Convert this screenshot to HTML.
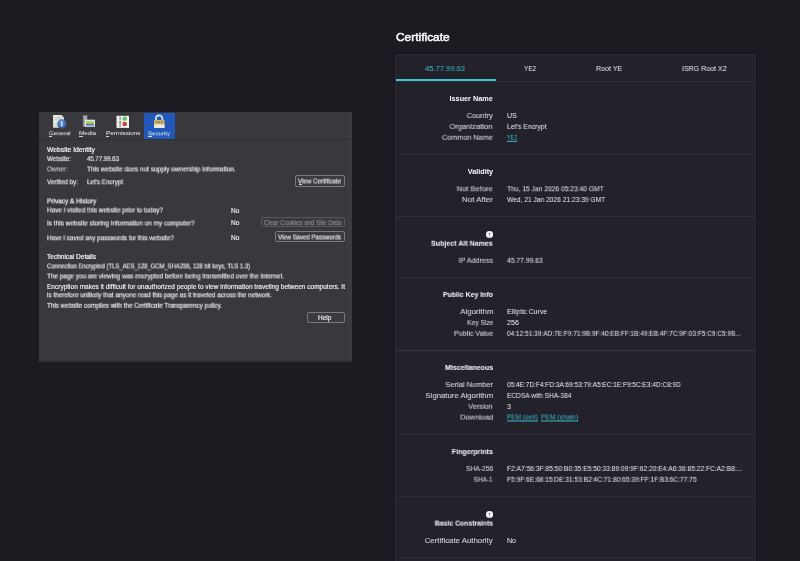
<!DOCTYPE html>
<html><head><meta charset="utf-8">
<style>
*{margin:0;padding:0;box-sizing:border-box}
html,body{width:800px;height:561px;overflow:hidden;background:#1c1b22;font-family:"Liberation Sans",sans-serif}
.x{position:absolute;white-space:pre;z-index:5;-webkit-text-stroke:0px currentColor;will-change:transform}
.xb{-webkit-text-stroke:0}
#dlg{position:absolute;left:39px;top:112px;width:313px;height:250px;background:#39383d}
.btn{position:absolute;border:1px solid #7a797e;border-radius:2px;background:#3b3a3f;z-index:2}
#card{position:absolute;left:395px;top:54px;width:361px;height:520px;background:#23222b;border:1px solid #2e2d36;border-radius:2px;box-shadow:0 0 0 1px rgba(10,10,14,0.35)}
.sep{position:absolute;left:400px;width:352px;height:1px;background:#302f38;z-index:3}
.info{position:absolute;width:7.2px;height:6.6px;border-radius:50%;background:#f4f4f8;z-index:4}
.info i{position:absolute;left:3.1px;top:1.5px;width:1px;height:2.6px;background:#6a6a72}
.info b{position:absolute;left:3.1px;top:4.5px;width:1px;height:0.9px;background:#9a9aa2}
</style></head><body>
<div id="dlg">
  <div style="position:absolute;left:308px;top:0;width:5px;height:250px;background:#3c3b40"></div>
  <div style="position:absolute;left:1px;top:248px;width:312px;height:2px;background:#323136"></div>
  <div style="position:absolute;left:0;top:27px;width:313px;height:1px;background:#2f2e33"></div>
  <div style="position:absolute;left:105px;top:1px;width:31px;height:26px;background:#2258b8"></div>
  <!-- general icon -->
  <svg style="position:absolute;left:13px;top:2px" width="18" height="16" viewBox="0 0 18 16">
    <defs><linearGradient id="gp" x1="0" y1="0" x2="1" y2="1"><stop offset="0" stop-color="#f4f4ee"/><stop offset="1" stop-color="#c8ccc4"/></linearGradient>
    <radialGradient id="gb" cx="0.45" cy="0.35" r="0.7"><stop offset="0" stop-color="#7aa6e0"/><stop offset="0.6" stop-color="#3e6eb4"/><stop offset="1" stop-color="#24508e"/></radialGradient></defs>
    <path d="M1.1 1 H9.3 L12 3.7 V13.7 H1.1 Z" fill="url(#gp)"/>
    <path d="M9.3 1 V3.7 H12" fill="#d8d8d0"/>
    <path d="M2.6 3.2 H8.4 M2.6 5 H9.6" stroke="#a8aca4" stroke-width="0.6"/>
    <circle cx="9.8" cy="9.9" r="4.6" fill="url(#gb)"/>
    <circle cx="9.8" cy="8.2" r="0.8" fill="#eef4ff"/>
    <rect x="9.1" y="9.5" width="1.4" height="2.9" fill="#eef4ff"/>
  </svg>
  <!-- media icon -->
  <svg style="position:absolute;left:43px;top:2px" width="18" height="16" viewBox="0 0 18 16">
    <rect x="0.8" y="1" width="4.8" height="12" fill="#6e6e70"/>
    <rect x="1.5" y="2" width="3.4" height="10" fill="#b4b4b0"/>
    <path d="M1.5 4 H4.9 M1.5 6 H4.9 M1.5 8 H4.9 M1.5 10 H4.9" stroke="#808080" stroke-width="0.5"/>
    <rect x="3" y="5.7" width="10" height="7.1" fill="#e8ecf2"/>
    <rect x="4" y="6.7" width="8" height="2.6" fill="#b8d890"/>
    <rect x="4" y="8.6" width="8" height="1.4" fill="#88c040"/>
    <rect x="4" y="10" width="8" height="1.8" fill="#6484c0"/>
  </svg>
  <!-- permissions icon -->
  <svg style="position:absolute;left:77px;top:3px" width="14" height="13" viewBox="0 0 14 13">
    <rect x="0.5" y="0.8" width="12.5" height="12.1" fill="#f2f4ec"/>
    <rect x="3.4" y="1.6" width="1.4" height="10.4" fill="#8c9092"/>
    <rect x="2.4" y="4.8" width="3.4" height="1.8" fill="#e4e6e6"/>
    <rect x="2.6" y="6.6" width="3" height="0.6" fill="#60646a"/>
    <circle cx="8.7" cy="3.6" r="2.2" fill="#58b840"/>
    <circle cx="8.3" cy="3.2" r="0.8" fill="#a8e090"/>
    <circle cx="8.7" cy="8.9" r="2.2" fill="#c02828"/>
    <circle cx="8.3" cy="8.5" r="0.8" fill="#f08080"/>
  </svg>
  <!-- lock icon -->
  <svg style="position:absolute;left:114px;top:2px" width="13" height="15" viewBox="0 0 13 15">
    <path d="M3 6.5 V4.6 A3.2 3.3 0 0 1 9.4 4.6 V6.5" fill="none" stroke="#e4e4ec" stroke-width="1.7"/>
    <rect x="1" y="6" width="10.5" height="8" rx="0.6" fill="#c8b464"/>
    <rect x="1" y="10.2" width="10.5" height="3.8" fill="#ece8dc"/>
    <circle cx="3.8" cy="8.1" r="0.6" fill="#4a4020"/><circle cx="6.25" cy="8.1" r="0.6" fill="#4a4020"/><circle cx="8.7" cy="8.1" r="0.6" fill="#4a4020"/>
  </svg>
</div>
<div class="btn" style="left:295.4px;top:175.4px;width:49.2px;height:11.2px"></div>
<div class="btn" style="left:261px;top:217.4px;width:83.6px;height:10px;border-color:#58575c"></div>
<div class="btn" style="left:275.4px;top:231.4px;width:69.2px;height:10.8px"></div>
<div class="btn" style="left:307px;top:311.5px;width:38px;height:11.5px"></div>
<div style="position:absolute;left:48.6px;top:136px;width:3.6px;height:0.8px;background:#d0d0d2;z-index:6"></div>
<div style="position:absolute;left:79.2px;top:136px;width:4px;height:0.8px;background:#d0d0d2;z-index:6"></div>
<div style="position:absolute;left:105.6px;top:136px;width:3.4px;height:0.8px;background:#d0d0d2;z-index:6"></div>
<div style="position:absolute;left:148.2px;top:136px;width:3.4px;height:0.8px;background:#d8e0f0;z-index:6"></div>
<div style="position:absolute;left:298.6px;top:184.3px;width:3.4px;height:0.8px;background:#d0d0d2;z-index:6"></div>
<div id="card"></div>
<div style="position:absolute;left:396px;top:79px;width:99.5px;height:2px;background:#3cc4d4;z-index:3"></div>
<div style="position:absolute;left:396px;top:81px;width:359px;height:1px;background:#302f38;z-index:3"></div>
<div class="sep" style="top:154px;left:400px;width:352px;background:#302f38"></div>
<div class="sep" style="top:216px;left:396px;width:359px;background:#302f38"></div>
<div class="sep" style="top:277px;left:400px;width:352px;background:#302f38"></div>
<div class="sep" style="top:350px;left:396px;width:359px;background:#393841"></div>
<div class="sep" style="top:434px;left:400px;width:355px;background:#302f38"></div>
<div class="sep" style="top:496px;left:397px;width:358px;background:#2e2d36"></div>
<div class="sep" style="top:557px;left:400px;width:352px;background:#302f38"></div>
<div class="info" style="left:485.5px;top:231.1px"><i></i><b></b></div>
<div class="info" style="left:485.5px;top:511.25px"><i></i><b></b></div>
<div class="x" style="top:28px;line-height:16px;font-size:11px;font-weight:normal;color:#fbfbfe;left:396.30px;transform-origin:0 50%;transform:translateY(0.60px) scaleX(1.0842);-webkit-text-stroke:0.5px currentColor">Certificate</div>
<div class="x" style="top:64px;line-height:10px;font-size:7.7px;font-weight:normal;color:#3cbccc;left:425.20px;transform-origin:0 50%;transform:translateY(0.00px) scaleX(0.9846);">45.77.99.63</div>
<div class="x" style="top:64px;line-height:10px;font-size:7.7px;font-weight:normal;color:#eeedf3;left:524.30px;transform-origin:0 50%;transform:translateY(0.00px) scaleX(0.8258);">YE2</div>
<div class="x" style="top:64px;line-height:10px;font-size:7.7px;font-weight:normal;color:#eeedf3;left:596.00px;transform-origin:0 50%;transform:translateY(0.00px) scaleX(0.9228);">Root YE</div>
<div class="x" style="top:64px;line-height:10px;font-size:7.7px;font-weight:normal;color:#eeedf3;left:681.50px;transform-origin:0 50%;transform:translateY(0.00px) scaleX(0.9134);">ISRG Root X2</div>
<div class="x xb" style="top:94px;line-height:10px;font-size:7.2px;font-weight:bold;color:#fbfbfe;left:450.25px;width:42.75px;text-align:right;transform-origin:100% 50%;transform:translateY(0.40px) scaleX(1.0105);">Issuer Name</div>
<div class="x" style="top:111px;line-height:10px;font-size:7.7px;font-weight:normal;color:#cecdd5;left:466.08px;width:26.92px;text-align:right;transform-origin:100% 50%;transform:translateY(0.00px) scaleX(0.9769);-webkit-text-stroke:0.12px currentColor">Country</div>
<div class="x" style="top:111px;line-height:10px;font-size:7.1px;font-weight:normal;color:#eeedf3;left:506.80px;transform-origin:0 50%;transform:translateY(0.00px) scaleX(1.0000);">US</div>
<div class="x" style="top:121px;line-height:10px;font-size:7.7px;font-weight:normal;color:#cecdd5;left:449.41px;width:43.59px;text-align:right;transform-origin:100% 50%;transform:translateY(0.90px) scaleX(0.9910);-webkit-text-stroke:0.12px currentColor">Organization</div>
<div class="x" style="top:121px;line-height:10px;font-size:7.1px;font-weight:normal;color:#eeedf3;left:506.80px;transform-origin:0 50%;transform:translateY(0.90px) scaleX(0.9731);">Let's Encrypt</div>
<div class="x" style="top:132px;line-height:10px;font-size:7.7px;font-weight:normal;color:#cecdd5;left:439.17px;width:53.83px;text-align:right;transform-origin:100% 50%;transform:translateY(0.80px) scaleX(0.9475);-webkit-text-stroke:0.12px currentColor">Common Name</div>
<div class="x" style="top:132px;line-height:10px;font-size:7.1px;font-weight:normal;color:#3cbccc;left:506.80px;transform-origin:0 50%;transform:translateY(0.80px) scaleX(0.7749);text-decoration:underline">YE2</div>
<div class="x xb" style="top:167px;line-height:10px;font-size:7.2px;font-weight:bold;color:#fbfbfe;left:467.83px;width:25.17px;text-align:right;transform-origin:100% 50%;transform:translateY(0.20px) scaleX(1.0130);">Validity</div>
<div class="x" style="top:184px;line-height:10px;font-size:7.7px;font-weight:normal;color:#cecdd5;left:456.25px;width:36.75px;text-align:right;transform-origin:100% 50%;transform:translateY(0.20px) scaleX(0.9796);-webkit-text-stroke:0.12px currentColor">Not Before</div>
<div class="x" style="top:184px;line-height:10px;font-size:7.1px;font-weight:normal;color:#eeedf3;left:506.80px;transform-origin:0 50%;transform:translateY(0.20px) scaleX(0.9431);">Thu, 15 Jan 2026 05:23:40 GMT</div>
<div class="x" style="top:195px;line-height:10px;font-size:7.7px;font-weight:normal;color:#cecdd5;left:463.08px;width:29.92px;text-align:right;transform-origin:100% 50%;transform:translateY(0.00px) scaleX(1.0293);-webkit-text-stroke:0.12px currentColor">Not After</div>
<div class="x" style="top:195px;line-height:10px;font-size:7.1px;font-weight:normal;color:#eeedf3;left:506.80px;transform-origin:0 50%;transform:translateY(0.00px) scaleX(0.9373);">Wed, 21 Jan 2026 21:23:39 GMT</div>
<div class="x xb" style="top:238px;line-height:10px;font-size:7.2px;font-weight:bold;color:#fbfbfe;left:430.16px;width:62.84px;text-align:right;transform-origin:100% 50%;transform:translateY(0.70px) scaleX(0.9834);">Subject Alt Names</div>
<div class="x" style="top:255px;line-height:10px;font-size:7.7px;font-weight:normal;color:#cecdd5;left:455.95px;width:37.05px;text-align:right;transform-origin:100% 50%;transform:translateY(0.80px) scaleX(0.9313);-webkit-text-stroke:0.12px currentColor">IP Address</div>
<div class="x" style="top:255px;line-height:10px;font-size:7.1px;font-weight:normal;color:#eeedf3;left:506.80px;transform-origin:0 50%;transform:translateY(0.80px) scaleX(0.9524);">45.77.99.63</div>
<div class="x xb" style="top:289px;line-height:10px;font-size:7.2px;font-weight:bold;color:#fbfbfe;left:441.08px;width:51.92px;text-align:right;transform-origin:100% 50%;transform:translateY(0.90px) scaleX(0.9630);">Public Key Info</div>
<div class="x" style="top:307px;line-height:10px;font-size:7.7px;font-weight:normal;color:#cecdd5;left:460.52px;width:32.48px;text-align:right;transform-origin:100% 50%;transform:translateY(0.00px) scaleX(1.0220);-webkit-text-stroke:0.12px currentColor">Algorithm</div>
<div class="x" style="top:307px;line-height:10px;font-size:7.1px;font-weight:normal;color:#eeedf3;left:506.80px;transform-origin:0 50%;transform:translateY(0.00px) scaleX(0.9660);">Elliptic Curve</div>
<div class="x" style="top:317px;line-height:10px;font-size:7.7px;font-weight:normal;color:#cecdd5;left:462.66px;width:30.34px;text-align:right;transform-origin:100% 50%;transform:translateY(0.90px) scaleX(0.8634);-webkit-text-stroke:0.12px currentColor">Key Size</div>
<div class="x" style="top:317px;line-height:10px;font-size:7.1px;font-weight:normal;color:#eeedf3;left:506.80px;transform-origin:0 50%;transform:translateY(0.90px) scaleX(1.0000);">256</div>
<div class="x" style="top:328px;line-height:10px;font-size:7.7px;font-weight:normal;color:#cecdd5;left:450.83px;width:42.17px;text-align:right;transform-origin:100% 50%;transform:translateY(0.80px) scaleX(0.9295);-webkit-text-stroke:0.12px currentColor">Public Value</div>
<div class="x" style="top:328px;line-height:10px;font-size:7.1px;font-weight:normal;color:#eeedf3;left:506.80px;transform-origin:0 50%;transform:translateY(0.80px) scaleX(0.9164);">04:12:51:39:AD:7E:F9:71:9B:9F:40:EB:FF:1B:49:EB:4F:7C:9F:03:F5:C9:C5:9B...</div>
<div class="x xb" style="top:362px;line-height:10px;font-size:7.2px;font-weight:bold;color:#fbfbfe;left:443.86px;width:49.14px;text-align:right;transform-origin:100% 50%;transform:translateY(0.90px) scaleX(0.9788);">Miscellaneous</div>
<div class="x" style="top:380px;line-height:10px;font-size:7.7px;font-weight:normal;color:#cecdd5;left:443.86px;width:49.14px;text-align:right;transform-origin:100% 50%;transform:translateY(0.00px) scaleX(0.9727);-webkit-text-stroke:0.12px currentColor">Serial Number</div>
<div class="x" style="top:380px;line-height:10px;font-size:7.1px;font-weight:normal;color:#eeedf3;left:506.80px;transform-origin:0 50%;transform:translateY(0.00px) scaleX(0.9163);">05:4E:7D:F4:FD:3A:69:53:79:A5:EC:1E:F9:5C:E3:4D:C8:9D</div>
<div class="x" style="top:390px;line-height:10px;font-size:7.7px;font-weight:normal;color:#cecdd5;left:425.91px;width:67.09px;text-align:right;transform-origin:100% 50%;transform:translateY(0.90px) scaleX(1.0061);-webkit-text-stroke:0.12px currentColor">Signature Algorithm</div>
<div class="x" style="top:390px;line-height:10px;font-size:7.1px;font-weight:normal;color:#eeedf3;left:506.80px;transform-origin:0 50%;transform:translateY(0.90px) scaleX(0.9281);">ECDSA with SHA-384</div>
<div class="x" style="top:401px;line-height:10px;font-size:7.7px;font-weight:normal;color:#cecdd5;left:467.36px;width:25.64px;text-align:right;transform-origin:100% 50%;transform:translateY(0.80px) scaleX(0.9516);-webkit-text-stroke:0.12px currentColor">Version</div>
<div class="x" style="top:401px;line-height:10px;font-size:7.1px;font-weight:normal;color:#eeedf3;left:506.80px;transform-origin:0 50%;transform:translateY(0.80px) scaleX(1.0000);">3</div>
<div class="x" style="top:412px;line-height:10px;font-size:7.7px;font-weight:normal;color:#cecdd5;left:458.80px;width:34.20px;text-align:right;transform-origin:100% 50%;transform:translateY(0.60px) scaleX(0.9648);-webkit-text-stroke:0.12px currentColor">Download</div>
<div class="x" style="top:412px;line-height:10px;font-size:7.1px;font-weight:normal;color:#3cbccc;left:506.80px;transform-origin:0 50%;transform:translateY(0.40px) scaleX(0.9113);text-decoration:underline">PEM (cert)</div>
<div class="x" style="top:412px;line-height:10px;font-size:7.1px;font-weight:normal;color:#3cbccc;left:540.50px;transform-origin:0 50%;transform:translateY(0.40px) scaleX(0.9505);text-decoration:underline">PEM (chain)</div>
<div class="x xb" style="top:447px;line-height:10px;font-size:7.2px;font-weight:bold;color:#fbfbfe;left:451.06px;width:41.94px;text-align:right;transform-origin:100% 50%;transform:translateY(0.10px) scaleX(0.9824);">Fingerprints</div>
<div class="x" style="top:463px;line-height:10px;font-size:7.7px;font-weight:normal;color:#cecdd5;left:461.80px;width:31.20px;text-align:right;transform-origin:100% 50%;transform:translateY(0.90px) scaleX(0.8717);-webkit-text-stroke:0.12px currentColor">SHA-256</div>
<div class="x" style="top:463px;line-height:10px;font-size:7.1px;font-weight:normal;color:#eeedf3;left:506.80px;transform-origin:0 50%;transform:translateY(0.90px) scaleX(0.9377);">F2:A7:56:3F:85:50:B0:35:E5:50:33:89:09:9F:62:20:E4:A6:36:85:22:FC:A2:B8:...</div>
<div class="x" style="top:474px;line-height:10px;font-size:7.7px;font-weight:normal;color:#cecdd5;left:470.34px;width:22.66px;text-align:right;transform-origin:100% 50%;transform:translateY(0.80px) scaleX(0.8386);-webkit-text-stroke:0.12px currentColor">SHA-1</div>
<div class="x" style="top:474px;line-height:10px;font-size:7.1px;font-weight:normal;color:#eeedf3;left:506.80px;transform-origin:0 50%;transform:translateY(0.80px) scaleX(0.9295);">F5:9F:6E:68:15:DE:31:53:B2:4C:71:80:65:39:FF:1F:B3:6C:77:75</div>
<div class="x xb" style="top:518px;line-height:10px;font-size:7.2px;font-weight:bold;color:#fbfbfe;left:431.88px;width:61.12px;text-align:right;transform-origin:100% 50%;transform:translateY(0.60px) scaleX(0.9554);">Basic Constraints</div>
<div class="x" style="top:535px;line-height:10px;font-size:7.7px;font-weight:normal;color:#cecdd5;left:426.34px;width:66.66px;text-align:right;transform-origin:100% 50%;transform:translateY(0.80px) scaleX(1.0202);-webkit-text-stroke:0.12px currentColor">Certificate Authority</div>
<div class="x" style="top:535px;line-height:10px;font-size:7.1px;font-weight:normal;color:#eeedf3;left:506.80px;transform-origin:0 50%;transform:translateY(0.80px) scaleX(1.0000);">No</div>
<div class="x" style="top:129px;line-height:8px;font-size:6.1px;font-weight:normal;color:#ededee;left:48.50px;transform-origin:0 50%;transform:translateY(0.13px) scaleX(0.9914);">General</div>
<div class="x" style="top:129px;line-height:8px;font-size:6.1px;font-weight:normal;color:#ededee;left:79.00px;transform-origin:0 50%;transform:translateY(0.13px) scaleX(1.0235);">Media</div>
<div class="x" style="top:129px;line-height:8px;font-size:6.1px;font-weight:normal;color:#ededee;left:105.50px;transform-origin:0 50%;transform:translateY(0.13px) scaleX(1.0395);">Permissions</div>
<div class="x" style="top:129px;line-height:8px;font-size:6.1px;font-weight:normal;color:#e8eef8;left:148.00px;transform-origin:0 50%;transform:translateY(0.33px) scaleX(0.9993);">Security</div>
<div class="x" style="top:145px;line-height:8px;font-size:6.5px;font-weight:normal;color:#ededee;left:47.00px;transform-origin:0 50%;transform:translateY(0.50px) scaleX(1.0403);-webkit-text-stroke:0.22px currentColor">Website Identity</div>
<div class="x" style="top:155px;line-height:8px;font-size:6.5px;font-weight:normal;color:#ededee;left:47.00px;transform-origin:0 50%;transform:translateY(0.10px) scaleX(0.9534);-webkit-text-stroke:0.15px currentColor">Website:</div>
<div class="x" style="top:155px;line-height:8px;font-size:6.5px;font-weight:normal;color:#ededee;left:87.00px;transform-origin:0 50%;transform:translateY(0.10px) scaleX(0.9318);-webkit-text-stroke:0.15px currentColor">45.77.99.63</div>
<div class="x" style="top:165px;line-height:8px;font-size:6.5px;font-weight:normal;color:#c6c6ca;left:47.00px;transform-origin:0 50%;transform:translateY(0.40px) scaleX(0.9784);-webkit-text-stroke:0.15px currentColor">Owner:</div>
<div class="x" style="top:165px;line-height:8px;font-size:6.5px;font-weight:normal;color:#ededee;left:87.00px;transform-origin:0 50%;transform:translateY(0.40px) scaleX(0.9862);-webkit-text-stroke:0.15px currentColor">This website does not supply ownership information.</div>
<div class="x" style="top:178px;line-height:8px;font-size:6.5px;font-weight:normal;color:#ededee;left:47.00px;transform-origin:0 50%;transform:translateY(0.30px) scaleX(0.9636);-webkit-text-stroke:0.15px currentColor">Verified by:</div>
<div class="x" style="top:178px;line-height:8px;font-size:6.5px;font-weight:normal;color:#ededee;left:87.00px;transform-origin:0 50%;transform:translateY(0.30px) scaleX(0.9632);-webkit-text-stroke:0.15px currentColor">Let's Encrypt</div>
<div class="x" style="top:177px;line-height:8px;font-size:6.5px;font-weight:normal;color:#ededee;left:298.40px;transform-origin:0 50%;transform:translateY(0.50px) scaleX(0.9546);-webkit-text-stroke:0.15px currentColor">View Certificate</div>
<div class="x" style="top:197px;line-height:8px;font-size:6.5px;font-weight:normal;color:#ededee;left:47.00px;transform-origin:0 50%;transform:translateY(0.40px) scaleX(0.9943);-webkit-text-stroke:0.22px currentColor">Privacy &amp; History</div>
<div class="x" style="top:206px;line-height:8px;font-size:6.5px;font-weight:normal;color:#ededee;left:47.00px;transform-origin:0 50%;transform:translateY(0.40px) scaleX(0.9819);-webkit-text-stroke:0.15px currentColor">Have I visited this website prior to today?</div>
<div class="x" style="top:207px;line-height:8px;font-size:6.5px;font-weight:normal;color:#ededee;left:230.60px;transform-origin:0 50%;transform:translateY(0.10px) scaleX(1.0000);-webkit-text-stroke:0.15px currentColor">No</div>
<div class="x" style="top:219px;line-height:8px;font-size:6.5px;font-weight:normal;color:#ededee;left:47.00px;transform-origin:0 50%;transform:translateY(0.50px) scaleX(0.9965);-webkit-text-stroke:0.15px currentColor">Is this website storing information on my computer?</div>
<div class="x" style="top:219px;line-height:8px;font-size:6.5px;font-weight:normal;color:#ededee;left:230.60px;transform-origin:0 50%;transform:translateY(0.30px) scaleX(1.0000);-webkit-text-stroke:0.15px currentColor">No</div>
<div class="x" style="top:219px;line-height:8px;font-size:6.5px;font-weight:normal;color:#8c8c90;left:264.00px;transform-origin:0 50%;transform:translateY(0.10px) scaleX(0.9437);-webkit-text-stroke:0.15px currentColor">Clear Cookies and Site Data</div>
<div class="x" style="top:234px;line-height:8px;font-size:6.5px;font-weight:normal;color:#ededee;left:47.00px;transform-origin:0 50%;transform:translateY(0.30px) scaleX(0.9630);-webkit-text-stroke:0.15px currentColor">Have I saved any passwords for this website?</div>
<div class="x" style="top:234px;line-height:8px;font-size:6.5px;font-weight:normal;color:#ededee;left:230.60px;transform-origin:0 50%;transform:translateY(0.10px) scaleX(1.0000);-webkit-text-stroke:0.15px currentColor">No</div>
<div class="x" style="top:233px;line-height:8px;font-size:6.5px;font-weight:normal;color:#ededee;left:278.40px;transform-origin:0 50%;transform:translateY(0.50px) scaleX(0.9290);-webkit-text-stroke:0.15px currentColor">View Saved Passwords</div>
<div class="x" style="top:253px;line-height:8px;font-size:6.5px;font-weight:normal;color:#ededee;left:47.00px;transform-origin:0 50%;transform:translateY(0.00px) scaleX(1.0045);-webkit-text-stroke:0.22px currentColor">Technical Details</div>
<div class="x" style="top:262px;line-height:8px;font-size:6.5px;font-weight:normal;color:#ededee;left:47.00px;transform-origin:0 50%;transform:translateY(0.40px) scaleX(0.9052);-webkit-text-stroke:0.15px currentColor">Connection Encrypted (TLS_AES_128_GCM_SHA256, 128 bit keys, TLS 1.3)</div>
<div class="x" style="top:272px;line-height:8px;font-size:6.5px;font-weight:normal;color:#ededee;left:47.00px;transform-origin:0 50%;transform:translateY(0.40px) scaleX(0.9833);-webkit-text-stroke:0.15px currentColor">The page you are viewing was encrypted before being transmitted over the Internet.</div>
<div class="x" style="top:283px;line-height:8px;font-size:6.5px;font-weight:normal;color:#ededee;left:47.00px;transform-origin:0 50%;transform:translateY(0.10px) scaleX(1.0038);-webkit-text-stroke:0.15px currentColor">Encryption makes it difficult for unauthorized people to view information traveling between computers. It</div>
<div class="x" style="top:291px;line-height:8px;font-size:6.5px;font-weight:normal;color:#ededee;left:47.00px;transform-origin:0 50%;transform:translateY(0.30px) scaleX(0.9715);-webkit-text-stroke:0.15px currentColor">is therefore unlikely that anyone read this page as it traveled across the network.</div>
<div class="x" style="top:301px;line-height:8px;font-size:6.5px;font-weight:normal;color:#ededee;left:47.00px;transform-origin:0 50%;transform:translateY(0.80px) scaleX(0.9733);-webkit-text-stroke:0.15px currentColor">This website complies with the Certificate Transparency policy.</div>
<div class="x" style="top:313px;line-height:8px;font-size:6.5px;font-weight:normal;color:#ededee;left:318.00px;transform-origin:0 50%;transform:translateY(0.70px) scaleX(1.0000);-webkit-text-stroke:0.15px currentColor">Help</div>
</body></html>
